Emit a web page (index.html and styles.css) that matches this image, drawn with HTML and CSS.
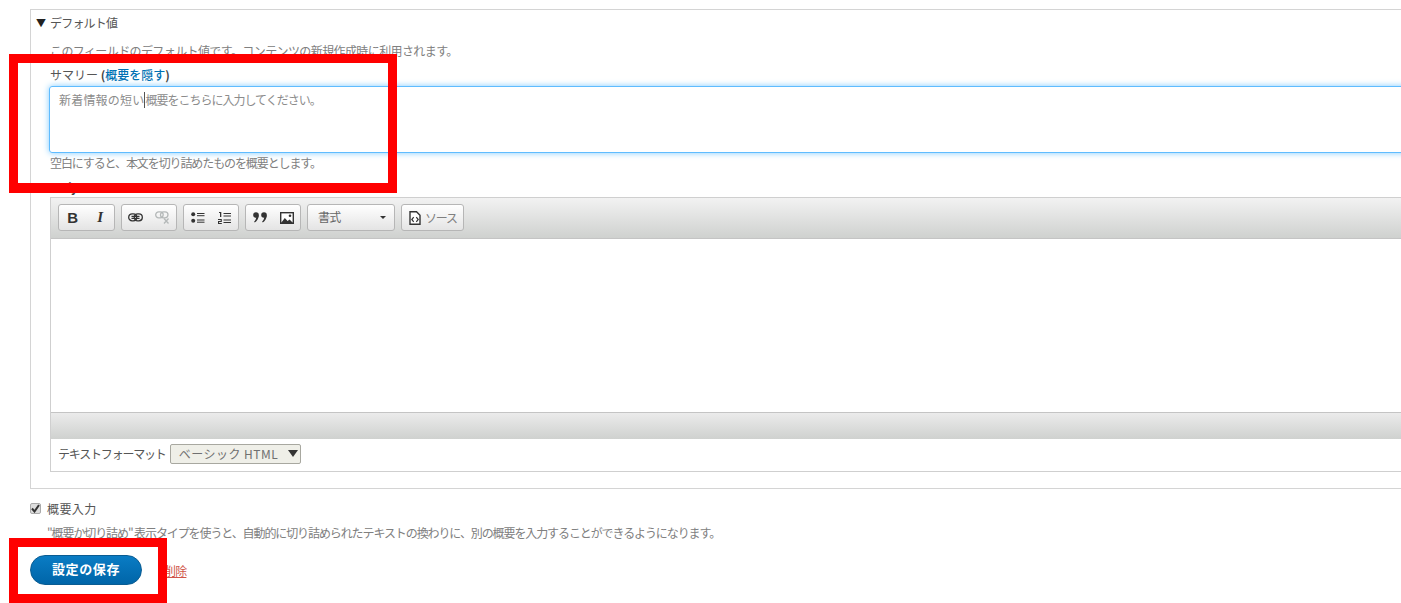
FILE: index.html
```html
<!DOCTYPE html>
<html lang="ja">
<head>
<meta charset="utf-8">
<title>デフォルト値</title>
<link rel="stylesheet" href="styles.css">
</head>
<body>
<main class="page">
  <section class="fieldset">
    <div class="legend"><span class="tri">▼</span><span>デフォルト値</span></div>
    <p class="desc intro">このフィールドのデフォルト値です。コンテンツの新規作成時に利用されます。</p>
    <div class="label summary-label">サマリー <b>(<a class="blue" href="#">概要を隠す</a>)</b></div>
    <div class="textarea"><span class="ph ph-a">新着情報の短い</span><i class="caret"></i><span class="ph ph-b">概要をこちらに入力してください。</span></div>
    <p class="desc help">空白にすると、本文を切り詰めたものを概要とします。</p>
    <div class="label body-label"><b>Body</b></div>
    <div class="editor">
      <div class="toolbar">
        <div class="group first">
          <span class="tb"><b class="glyph-b">B</b></span>
          <span class="tb"><b class="glyph-i">I</b></span>
        </div>
        <div class="group">
          <span class="tb"><svg width="15" height="9" viewBox="0 0 15 9"><g fill="none" stroke="#333" stroke-width="1.300"><rect x=".7" y=".8" width="8" height="7" rx="3.400"/><rect x="6.300" y=".8" width="8" height="7" rx="3.400"/><path d="M3.500 3.300h8M3.500 5.300h8"/></g></svg></span>
          <span class="tb"><svg width="15" height="13" viewBox="0 0 15 13"><g fill="none" stroke="#b4b8b8" stroke-width="1.300"><rect x=".7" y=".8" width="7.500" height="6" rx="3"/><rect x="5.500" y=".8" width="7.500" height="6" rx="3"/><path d="M9 7.500l4.500 5M13.500 7.500L9 12.500"/></g></svg></span>
        </div>
        <div class="group">
          <span class="tb"><svg width="14" height="11" viewBox="0 0 14 11"><g fill="#333"><circle cx="2.200" cy="2.200" r="2"/><circle cx="2.200" cy="8.800" r="2"/><rect x="6" y="1" width="7.500" height="1"/><rect x="6" y="3.200" width="7.500" height="1"/><rect x="6" y="7.500" width="7.500" height="1"/><rect x="6" y="9.700" width="7.500" height="1"/></g></svg></span>
          <span class="tb"><svg width="13" height="12" viewBox="0 0 13 12"><g fill="#333"><rect x="2" y="0" width="1.300" height="5"/><rect x="1" y="0" width="1.200" height="1"/><rect x="0" y="7" width="3.800" height="1"/><rect x="2.700" y="8" width="1.100" height="1"/><rect x="0" y="9" width="3.800" height="1"/><rect x="0" y="10" width="1.100" height="1"/><rect x="0" y="11" width="3.800" height="1"/><rect x="5.500" y="1" width="7.500" height="1"/><rect x="5.500" y="3.500" width="7.500" height="1"/><rect x="5.500" y="7.500" width="7.500" height="1"/><rect x="5.500" y="10" width="7.500" height="1"/></g></svg></span>
        </div>
        <div class="group">
          <span class="tb"><svg width="14" height="11" viewBox="0 0 14 11"><g fill="#333"><circle cx="3" cy="3" r="2.800"/><path d="M5.800 3c0 3.500-1.800 6.300-4 7.500l-.7-1c1.200-.8 2-2.200 2-4z"/><circle cx="11" cy="3" r="2.800"/><path d="M13.800 3c0 3.500-1.800 6.300-4 7.500l-.7-1c1.200-.8 2-2.200 2-4z"/></g></svg></span>
          <span class="tb"><svg width="14" height="12" viewBox="0 0 14 12"><rect x=".7" y=".7" width="12.600" height="10.600" fill="#fff" stroke="#333" stroke-width="1.400"/><path d="M1 11l3.800-5 2.800 3 2-1.600L13 11z" fill="#333"/><circle cx="10" cy="3.700" r="1.300" fill="#333"/></svg></span>
        </div>
        <div class="combo"><span>書式</span><i class="combo-arrow"></i></div>
        <div class="source"><svg width="12" height="14" viewBox="0 0 12 14"><path d="M1 .8h6.500l3.500 3.500v8.900H1z" fill="#fff" stroke="#333" stroke-width="1.400"/><path d="M4.700 6.200L2.800 8.500l1.900 2.300M7.300 6.200l1.900 2.300-1.900 2.300" fill="none" stroke="#333" stroke-width="1.200"/></svg><span>ソース</span></div>
      </div>
      <div class="content"></div>
      <div class="bottombar"></div>
      <div class="format"><span class="format-label">テキストフォーマット</span><span class="select"><span>ベーシック HTML</span><i class="sel-arrow"></i></span></div>
    </div>
  </section>
  <div class="check-row"><span class="checkbox"><svg width="9" height="9" viewBox="0 0 9 9"><path d="M1 4.500l2.500 3L8 1" fill="none" stroke="#333" stroke-width="2"/></svg></span><span class="check-label">概要入力</span></div>
  <p class="desc check-desc">"概要か切り詰め" 表示タイプを使うと、自動的に切り詰められたテキストの換わりに、別の概要を入力することができるようになります。</p>
  <div class="actions"><button class="save" type="button">設定の保存</button><a class="delete" href="#">削除</a></div>
</main>
<div class="mark mark-summary"></div>
<div class="mark mark-save"></div>
</body>
</html>
```
FILE: styles.css
```css
* { box-sizing: border-box; }
html, body { margin: 0; padding: 0; height: 603px; overflow: hidden; background: #fff; }
body {
  position: relative;
  font-family: "Noto Sans CJK JP", "Liberation Sans", sans-serif;
  font-size: 12px;
  color: #555;
  letter-spacing: -0.8px;
}
.page { width: 1500px; padding: 9px 0 0 30px; }
p { margin: 0; }
.fieldset { height: 480px; border: 1px solid #d4d4d4; padding: 0 0 0 19px; }
.legend { height: 24px; display: flex; align-items: center; margin-left: -14px; padding-top: 1px; }
.tri { width: 14px; font-size: 10px; color: #222; letter-spacing: 0; }
.desc { color: #808080; line-height: 16px; }
.intro { margin-top: 9px; letter-spacing: -0.6px; }
.label { line-height: 16px; }
.summary-label { margin-top: 8px; letter-spacing: 0; }
.label b { font-weight: 700; color: #444; }
.blue { color: #0071b3; text-decoration: none; font-weight: 500; }
.textarea {
  margin: 3px 0 0 -1px; height: 67px; width: 1441px;
  border: 1px solid #5fbcff; border-radius: 3px; padding: 5px 8px 5px 9px;
  box-shadow: 0 0 6px #7fcbff; line-height: 15px;
  display: flex; align-items: flex-start;
}
.ph { color: #8c8c8c; }
.ph-a { letter-spacing: 0.2px; }
.ph-b { letter-spacing: -1px; }
.caret { width: 1px; height: 16px; background: #555; flex: none; }
.help { margin-top: 2px; letter-spacing: -1.1px; }
.body-label { margin-top: 8px; height: 18px; }
.editor { width: 1440px; height: 275px; border: 1px solid #cfcfcf; display: flex; flex-direction: column; }
.toolbar {
  height: 41px; flex: none; display: flex; gap: 6px; padding: 6px 0 0 7px;
  background: linear-gradient(#f2f2f2, #cfd1cf); border-bottom: 1px solid #c4c4c4;
}
.group, .combo, .source {
  height: 27px; border: 1px solid #b6b6b6; border-radius: 3px;
  background: linear-gradient(#fff, #e4e4e4); display: flex; align-items: center;
}
.group { width: 56px; }
.group.first { width: 57px; }
.tb { width: 27px; display: flex; align-items: center; justify-content: center; flex: auto; }
.glyph-b { font: 700 15px "Liberation Sans", sans-serif; color: #333; letter-spacing: 0; }
.glyph-i { font: italic 700 15px "Liberation Serif", serif; color: #333; letter-spacing: 0; }
.combo { width: 88px; padding: 0 0 2px 10px; justify-content: space-between; color: #666; }
.combo-arrow { width: 0; height: 0; margin: 2px 8px 0 0; border: 3px solid transparent; border-top-color: #333; border-bottom: 0; }
.source { width: 63px; padding: 0 0 1px 7px; gap: 4px; color: #808080; letter-spacing: -1.2px; }
.source svg { margin-top: 1px; }
.content { flex: 1; background: #fff; }
.bottombar { height: 27px; flex: none; background: linear-gradient(#ebebeb, #cfd1cf); border-top: 1px solid #c4c4c4; }
.format { height: 32px; flex: none; display: flex; align-items: center; padding: 0 0 3px 7px; gap: 4px; }
.format-label { letter-spacing: -1.2px; }
.select {
  width: 131px; height: 20px; border: 1px solid #a8a8a0; border-radius: 2px; background: #efefe8;
  display: flex; align-items: center; justify-content: space-between; padding: 0 2px 0 8px;
  color: #707070; letter-spacing: 0.5px; font-size: 12px;
}
.sel-arrow { width: 0; height: 0; border: 5px solid transparent; border-top: 7px solid #333; border-bottom: 0; }
.check-row { height: 21px; margin-top: 9px; display: flex; align-items: center; gap: 6px; }
.check-label { letter-spacing: 0.4px; }
.checkbox {
  width: 11px; height: 11px; border: 1px solid #aaa; border-radius: 2px; background: #ddd;
  display: flex; align-items: center; justify-content: center;
}
.check-desc { margin: 6px 0 0 17px; letter-spacing: -1.1px; }
.actions { margin-top: 14px; display: flex; align-items: center; gap: 22px; }
.save {
  width: 112px; height: 30px; border: 1px solid #0a5c92; border-radius: 15px;
  background: linear-gradient(#0a7cc4, #0065a8); color: #fff; padding: 0 0 3px;
  font: 700 13px "Noto Sans CJK JP", sans-serif; letter-spacing: 0.6px;
}
.delete { color: #d0554a; font-size: 12px; }
.mark { position: absolute; border: 9px solid #f00; left: 9px; }
.mark-summary { top: 54px; width: 388px; height: 139px; border-width: 9px 9px 10px; }
.mark-save { top: 538px; width: 158px; height: 65px; }
```
